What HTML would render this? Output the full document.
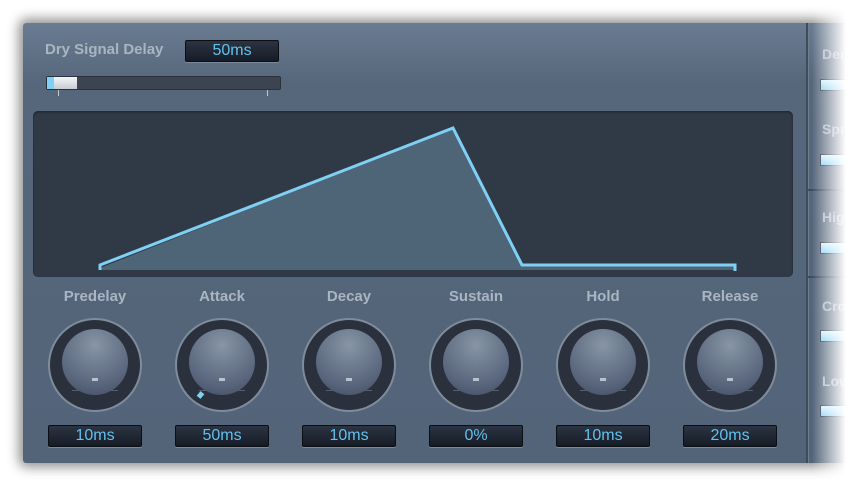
<!DOCTYPE html><html><head><style>
body{margin:0;width:852px;height:488px;background:#fff;position:relative;overflow:hidden;font-family:"Liberation Sans",sans-serif}
.panel{position:absolute;left:23px;top:23px;width:840px;height:440px;background:linear-gradient(#6a7c91,#56677c 60px,#536479);box-shadow:0 0 12px 4px rgba(0,0,0,.45);border-radius:3px}
.lbl{position:absolute;color:#aab5c2;font-weight:bold;font-size:15px;text-align:center}
.val{position:absolute;width:92px;height:20px;background:linear-gradient(#2c3442,#161c26);border:1px solid #0b0e13;box-shadow:0 1px 0 #7a8a9c;color:#5fc2f0;font-size:16px;text-align:center;line-height:20px;border-radius:2px}
.knob{position:absolute;width:90px;height:90px;border-radius:50%;background:#2a303c;box-shadow:0 0 0 2px #7f8c9b}
.knob .c{position:absolute;left:12px;top:9px;width:66px;height:66px;border-radius:50%;background:radial-gradient(circle at 50% 25%,#8795a6,#56637a 70%,#3e4859)}
.knob .d{position:absolute;left:42px;top:58px;width:6px;height:3px;background:#b8c2cc}
.knob .s{position:absolute;left:22px;top:70px;width:46px;height:20px;border-top:1px solid #555f6d}
.sl{position:absolute;left:820px;width:40px;height:10px;background:linear-gradient(#d6f2ff,#7fd0f5);border:1px solid #2a3340}
.rl{position:absolute;left:822px;color:#aab5c2;font-weight:bold;font-size:14px}
</style></head><body>
<div class="panel"></div>
<div class="lbl" style="left:45px;top:41px">Dry Signal Delay</div>
<div class="val" style="left:185px;top:40px;width:92px">50ms</div>
<div style="position:absolute;left:46px;top:76px;width:233px;height:12px;background:#3b4450;border:1px solid #2a313b;border-radius:2px"></div>
<div style="position:absolute;left:47px;top:77px;width:30px;height:12px;background:linear-gradient(#f4f6f8,#c6ccd2)"></div>
<div style="position:absolute;left:47px;top:77px;width:7px;height:12px;background:#7fd0f5"></div>
<div style="position:absolute;left:58px;top:90px;width:1px;height:6px;background:#c0c8d0"></div>
<div style="position:absolute;left:267px;top:90px;width:1px;height:6px;background:#c0c8d0"></div>
<div style="position:absolute;left:806px;top:23px;width:2px;height:440px;background:#3f4c5c;border-right:1px solid #6e7e90"></div>
<div style="position:absolute;left:808px;top:189px;width:50px;height:2px;background:#3f4c5c"></div>
<div style="position:absolute;left:808px;top:276px;width:50px;height:2px;background:#3f4c5c"></div>
<div style="position:absolute;left:33px;top:111px;width:760px;height:166px;background:#303a46;border-radius:5px;box-shadow:inset 0 1px 2px #1c222a"></div>
<svg style="position:absolute;left:0;top:0" width="852" height="488"><polygon points="100,268 453,128 522,265 735,265 735,270 100,270" fill="#4e6577"/><polyline points="100,270 100,265 453,128 522,265 735,265 735,271" fill="none" stroke="#7fd0f5" stroke-width="3"/></svg>
<div class="lbl" style="left:45px;top:288px;width:100px">Predelay</div>
<div class="lbl" style="left:172px;top:288px;width:100px">Attack</div>
<div class="lbl" style="left:299px;top:288px;width:100px">Decay</div>
<div class="lbl" style="left:426px;top:288px;width:100px">Sustain</div>
<div class="lbl" style="left:553px;top:288px;width:100px">Hold</div>
<div class="lbl" style="left:680px;top:288px;width:100px">Release</div>
<div class="knob" style="left:50px;top:320px"><div class="s"></div><div class="c"></div><div class="d"></div></div>
<div class="knob" style="left:177px;top:320px"><div class="s"></div><div class="c"></div><div class="d"></div><div style="position:absolute;left:21px;top:72px;width:5px;height:6px;background:#7fd0f5;transform:rotate(40deg)"></div></div>
<div class="knob" style="left:304px;top:320px"><div class="s"></div><div class="c"></div><div class="d"></div></div>
<div class="knob" style="left:431px;top:320px"><div class="s"></div><div class="c"></div><div class="d"></div></div>
<div class="knob" style="left:558px;top:320px"><div class="s"></div><div class="c"></div><div class="d"></div></div>
<div class="knob" style="left:685px;top:320px"><div class="s"></div><div class="c"></div><div class="d"></div></div>
<div class="val" style="left:48px;top:425px">10ms</div>
<div class="val" style="left:175px;top:425px">50ms</div>
<div class="val" style="left:302px;top:425px">10ms</div>
<div class="val" style="left:429px;top:425px">0%</div>
<div class="val" style="left:556px;top:425px">10ms</div>
<div class="val" style="left:683px;top:425px">20ms</div>
<div class="rl" style="top:46px">Den</div><div class="sl" style="top:79px"></div>
<div class="rl" style="top:121px">Spr</div><div class="sl" style="top:154px"></div>
<div class="rl" style="top:209px">Hig</div><div class="sl" style="top:242px"></div>
<div class="rl" style="top:298px">Cro</div><div class="sl" style="top:330px"></div>
<div class="rl" style="top:373px">Low</div><div class="sl" style="top:405px"></div>
<div style="position:absolute;left:812px;top:0;width:40px;height:488px;background:linear-gradient(90deg,rgba(255,255,255,0),#fff 85%)"></div>
</body></html>
